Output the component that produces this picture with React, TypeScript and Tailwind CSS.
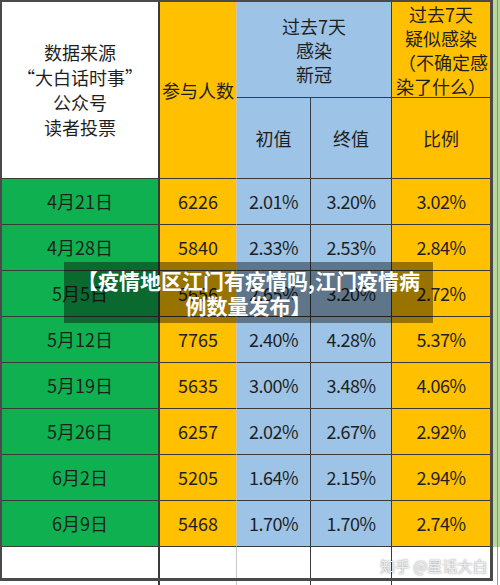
const rows = [
  ["4月21日", "6226", "2.01%", "3.20%", "3.02%"],
  ["4月28日", "5840", "2.33%", "2.53%", "2.84%"],
  ["5月5日", "5656", "2.65%", "3.20%", "2.72%"],
  ["5月12日", "7765", "2.40%", "4.28%", "5.37%"],
  ["5月19日", "5635", "3.00%", "3.48%", "4.06%"],
  ["5月26日", "6257", "2.02%", "2.67%", "2.92%"],
  ["6月2日", "5205", "1.64%", "2.15%", "2.94%"],
  ["6月9日", "5468", "1.70%", "1.70%", "2.74%"],
];

const cell = "flex items-center justify-center text-center";

export default function App() {
  return (
    <div className="relative flex h-[585px] w-[500px] overflow-hidden bg-white font-['Noto_Sans_CJK_SC',sans-serif] text-[#1f1f1f]">
      <div className="flex w-[493px] flex-col">
        {/* table frame */}
        <div className="grid h-[581px] w-[493px] grid-cols-[158px_77px_74px_81px_98px] grid-rows-[96px_81px_repeat(8,46px)_31px] border-t-2 border-r-[3px] border-b-[3px] border-l-2 border-[#4a4a4a]">
          <div className={`${cell} row-span-2 flex-col border-r-2 border-b border-[#3a3a3a] bg-white text-[18px] leading-[25px]`}>
            <span>数据来源</span>
            <span>“大白话时事”</span>
            <span>公众号</span>
            <span>读者投票</span>
          </div>
          <div className={`${cell} row-span-2 border-r border-b border-r-[#c9c4b0] border-b-[#3a3a3a] bg-[#ffc000] text-[18px]`}>
            参与人数
          </div>
          <div className={`${cell} col-span-2 flex-col border-r border-b border-[#3a3a3a] bg-[#9dc3e6] text-[18px] leading-[24px]`}>
            <span>过去7天</span>
            <span>感染</span>
            <span>新冠</span>
          </div>
          <div className={`${cell} flex-col border-b border-[#3a3a3a] bg-[#ffc000] text-[18px] leading-[24px] whitespace-nowrap`}>
            <span>过去7天</span>
            <span>疑似感染</span>
            <span className="pl-[4px]">（不确定感</span>
            <span>染了什么）</span>
          </div>
          <div className={`${cell} border-r border-b border-[#3a3a3a] bg-[#9dc3e6] text-[18px]`}>初值</div>
          <div className={`${cell} border-r border-b border-[#3a3a3a] bg-[#9dc3e6] text-[18px]`}>终值</div>
          <div className={`${cell} border-b border-[#3a3a3a] bg-[#ffc000] text-[18px]`}>比例</div>

          {rows.map((r) => (
            <Row key={r[0]} r={r} />
          ))}

          <div className="border-r-2 border-[#3a3a3a] bg-white" />
          <div className="border-r border-[#c9c9c9] bg-white" />
          <div className="border-r border-[#3a3a3a] bg-white" />
          <div className="border-r border-[#3a3a3a] bg-white" />
          <div className="bg-white" />
        </div>
        {/* next sheet row peeking below */}
        <div className="flex h-[4px]">
          <div className="w-[160px] border-r-2 border-[#3a3a3a]" />
          <div className="w-[77px] border-r border-[#c9c9c9]" />
          <div className="w-[74px] border-r border-[#3a3a3a]" />
          <div className="w-[81px] border-r border-[#3a3a3a]" />
        </div>
      </div>

      {/* neighbouring column */}
      <div className="flex w-[7px] flex-col">
        <div className="flex h-[547px]">
          <div className="w-[4px] bg-[#b9d89c]" />
          <div className="w-[1px] bg-[#8c8c8c]" />
          <div className="w-[2px] bg-[#b9d89c]" />
        </div>
        <div className="flex flex-1">
          <div className="w-[4px] bg-white" />
          <div className="w-[1px] bg-[#9a9a9a]" />
          <div className="w-[2px] bg-white" />
        </div>
      </div>

      {/* title overlay */}
      <div className="absolute left-[64px] top-[262px] flex h-[61px] w-[369px] flex-col items-center justify-center bg-black/40 text-[21px] font-bold leading-[25px] text-white">
        <span className="whitespace-nowrap">【疫情地区江门有疫情吗,江门疫情病</span>
        <span>例数量发布】</span>
      </div>

      {/* watermark */}
      <div className="absolute left-[380px] top-[555px] whitespace-nowrap text-[15px] text-[#ececec] [text-shadow:0_0_2px_rgba(0,0,0,0.5)]">
        知乎 @星话大白
      </div>
    </div>
  );
}

function Row({ r }: { r: string[] }) {
  return (
    <>
      <div className={`${cell} border-r-2 border-b border-[#3a3a3a] bg-[#0fb04f] text-[18px]`}>{r[0]}</div>
      <div className={`${cell} border-r border-b border-r-[#c9c4b0] border-b-[#3a3a3a] bg-[#ffc000] text-[18px]`}>{r[1]}</div>
      <div className={`${cell} border-r border-b border-[#3a3a3a] bg-[#9dc3e6] text-[18px] tracking-[-0.5px]`}>{r[2]}</div>
      <div className={`${cell} border-r border-b border-[#3a3a3a] bg-[#9dc3e6] text-[18px] tracking-[-0.5px]`}>{r[3]}</div>
      <div className={`${cell} border-b border-[#3a3a3a] bg-[#ffc000] text-[18px] tracking-[-0.5px]`}>{r[4]}</div>
    </>
  );
}
